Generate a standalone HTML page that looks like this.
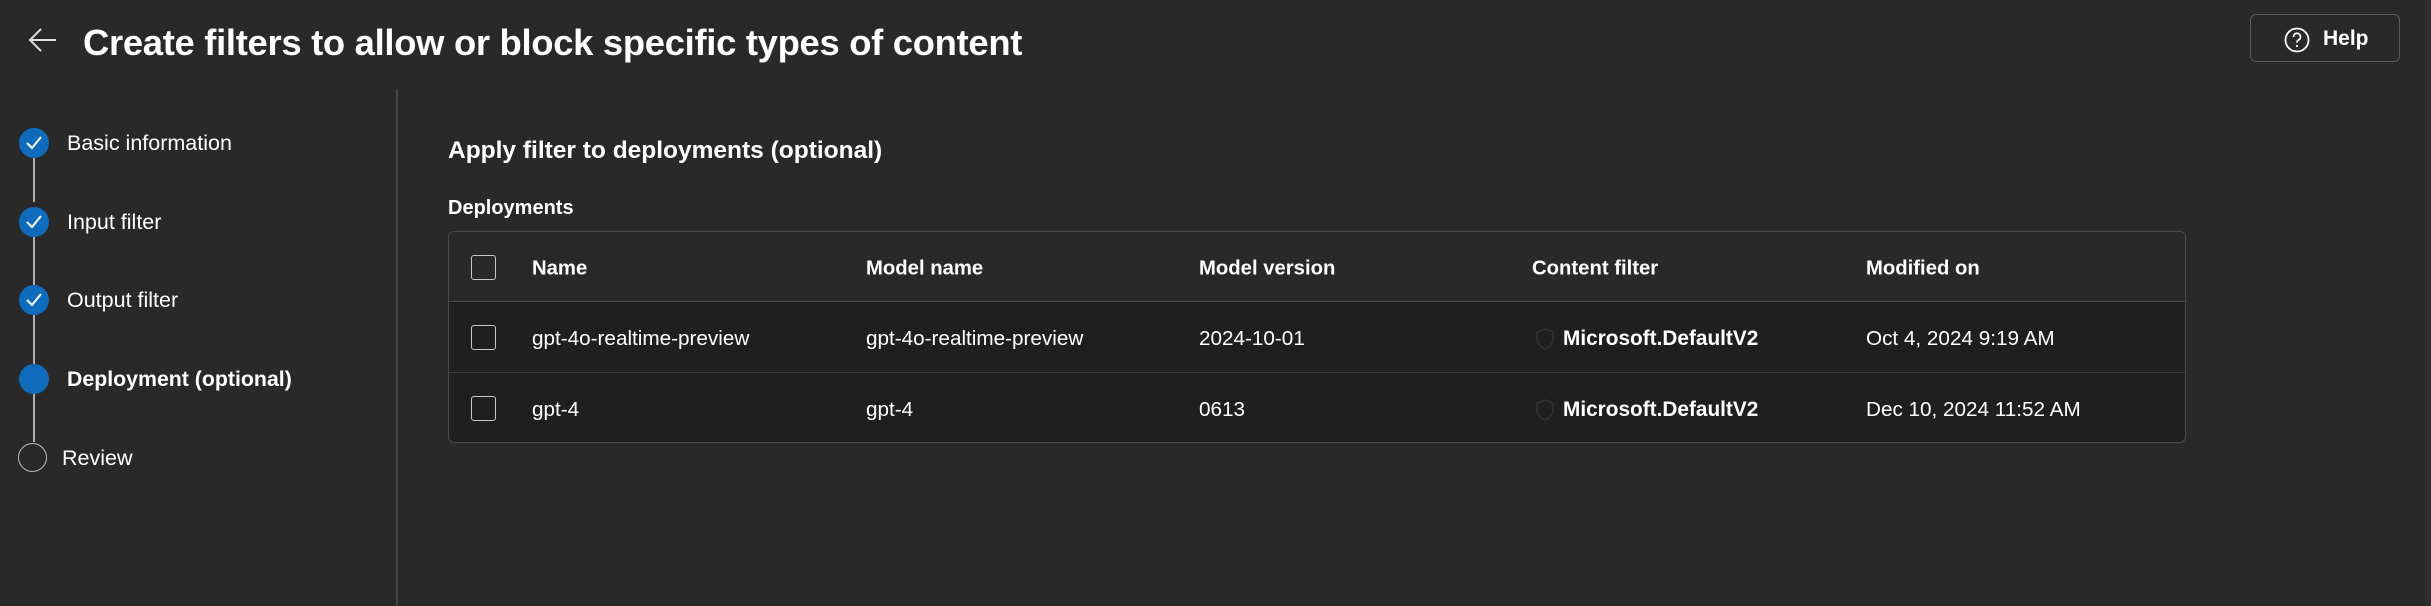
<!DOCTYPE html>
<html><head><meta charset="utf-8"><style>
*{margin:0;padding:0;box-sizing:border-box}
body{width:2431px;height:606px;background:#292929;color:#fff;font-family:"Liberation Sans",sans-serif;position:relative;overflow:hidden}
.a{position:absolute;white-space:nowrap}
.title{left:83px;top:22px;font-size:36.4px;font-weight:bold;letter-spacing:-0.3px}
.step{font-size:21.5px;left:67px;line-height:26px}
.circ{position:absolute;left:19px;width:30px;height:30px;border-radius:50%;background:#0f6cbd}
.line{position:absolute;left:33px;width:2px;background:#b0b0b0}
.tbl{position:absolute;left:448px;top:231px;width:1738px;height:212px;border:1.5px solid #4a4a4a;border-radius:6px;overflow:hidden;background:#1f1f1f}
.hdr{position:absolute;left:0;top:0;width:100%;height:70px;background:#292929;border-bottom:1.5px solid #4a4a4a}
.r1{position:absolute;left:0;top:140px;width:100%;border-top:1.5px solid #3e3e3e}
.cb{position:absolute;width:25px;height:25px;border:1.5px solid #c8c8c8;border-radius:3px}
.t{position:absolute;font-size:20.7px;white-space:nowrap;transform:translateY(-50%)}
.b{font-weight:bold;font-size:20.3px}
</style></head><body>
<svg class="a" style="left:28px;top:27px" width="30" height="26" viewBox="0 0 30 26"><path d="M13 2 L2 13 L13 24 M2 13 H28" stroke="#ddd" stroke-width="2" fill="none"/></svg>
<div class="a title">Create filters to allow or block specific types of content</div>
<div class="a" style="left:2250px;top:14px;width:150px;height:48px;border:1.5px solid #5a5a5a;border-radius:6px"></div>
<svg class="a" style="left:2284px;top:27px" width="26" height="26" viewBox="0 0 26 26"><circle cx="13" cy="13" r="11.5" stroke="#fff" stroke-width="1.8" fill="none"/><path d="M9.5 10 a3.5 3.5 0 1 1 5 3 c-1.2 .7-1.5 1.3-1.5 2.6" stroke="#fff" stroke-width="1.8" fill="none"/><circle cx="13" cy="19" r="1.1" fill="#fff"/></svg>
<div class="a" style="left:2323px;top:27px;font-size:21px;font-weight:bold">Help</div>
<div class="a" style="left:396px;top:89px;width:1.5px;height:517px;background:#444"></div>
<div class="line" style="top:158px;height:44px"></div>
<div class="line" style="top:237px;height:48px"></div>
<div class="line" style="top:315px;height:49px"></div>
<div class="line" style="top:394px;height:48px"></div>
<div class="circ" style="top:128px"></div><div class="circ" style="top:207px"></div><div class="circ" style="top:285px"></div><div class="circ" style="top:364px"></div>
<div class="circ" style="top:443px;background:none;border:1.5px solid #bbb;left:18px;width:29px;height:29px"></div>
<svg class="a" style="left:19px;top:128px" width="30" height="190"><g stroke="#fff" stroke-width="2" fill="none"><path d="M8 15 L13 20 L22 9"/><path d="M8 94 L13 99 L22 88"/><path d="M8 172 L13 177 L22 166"/></g></svg>
<div class="a step" style="top:130px">Basic information</div>
<div class="a step" style="top:209px">Input filter</div>
<div class="a step" style="top:287px">Output filter</div>
<div class="a step b" style="top:366px;font-size:21.3px">Deployment (optional)</div>
<div class="a step" style="top:445px;left:62px">Review</div>
<div class="a" style="left:448px;top:137px;font-size:24.5px;font-weight:bold">Apply filter to deployments (optional)</div>
<div class="a" style="left:448px;top:197px;font-size:20px;font-weight:bold">Deployments</div>
<div class="tbl"><div class="hdr"></div><div class="r1"></div>
<div class="cb" style="left:22px;top:23px"></div><div class="cb" style="left:22px;top:93px"></div><div class="cb" style="left:22px;top:164px"></div>
<div class="t b" style="left:83px;top:37px">Name</div><div class="t b" style="left:417px;top:37px">Model name</div><div class="t b" style="left:750px;top:37px">Model version</div><div class="t b" style="left:1083px;top:37px">Content filter</div><div class="t b" style="left:1417px;top:37px">Modified on</div>
<div class="t" style="left:83px;top:107px">gpt-4o-realtime-preview</div><div class="t" style="left:417px;top:107px">gpt-4o-realtime-preview</div><div class="t" style="left:750px;top:107px">2024-10-01</div><div class="t b" style="left:1114px;top:107px;font-size:20.8px">Microsoft.DefaultV2</div><div class="t" style="left:1417px;top:107px">Oct 4, 2024 9:19 AM</div>
<div class="t" style="left:83px;top:178px">gpt-4</div><div class="t" style="left:417px;top:178px">gpt-4</div><div class="t" style="left:750px;top:178px">0613</div><div class="t b" style="left:1114px;top:178px;font-size:20.8px">Microsoft.DefaultV2</div><div class="t" style="left:1417px;top:178px">Dec 10, 2024 11:52 AM</div>
<svg style="position:absolute;left:1086px;top:95px" width="20" height="24"><path d="M10 2 L18 5 V12 C18 17 14 20 10 22 C6 20 2 17 2 12 V5 Z" stroke="#333" stroke-width="1.5" fill="none"/></svg>
<svg style="position:absolute;left:1086px;top:166px" width="20" height="24"><path d="M10 2 L18 5 V12 C18 17 14 20 10 22 C6 20 2 17 2 12 V5 Z" stroke="#333" stroke-width="1.5" fill="none"/></svg>
</div>
<div class="a" style="left:2425px;top:0;width:6px;height:606px;background:#2e2e2e"></div>
</body></html>
